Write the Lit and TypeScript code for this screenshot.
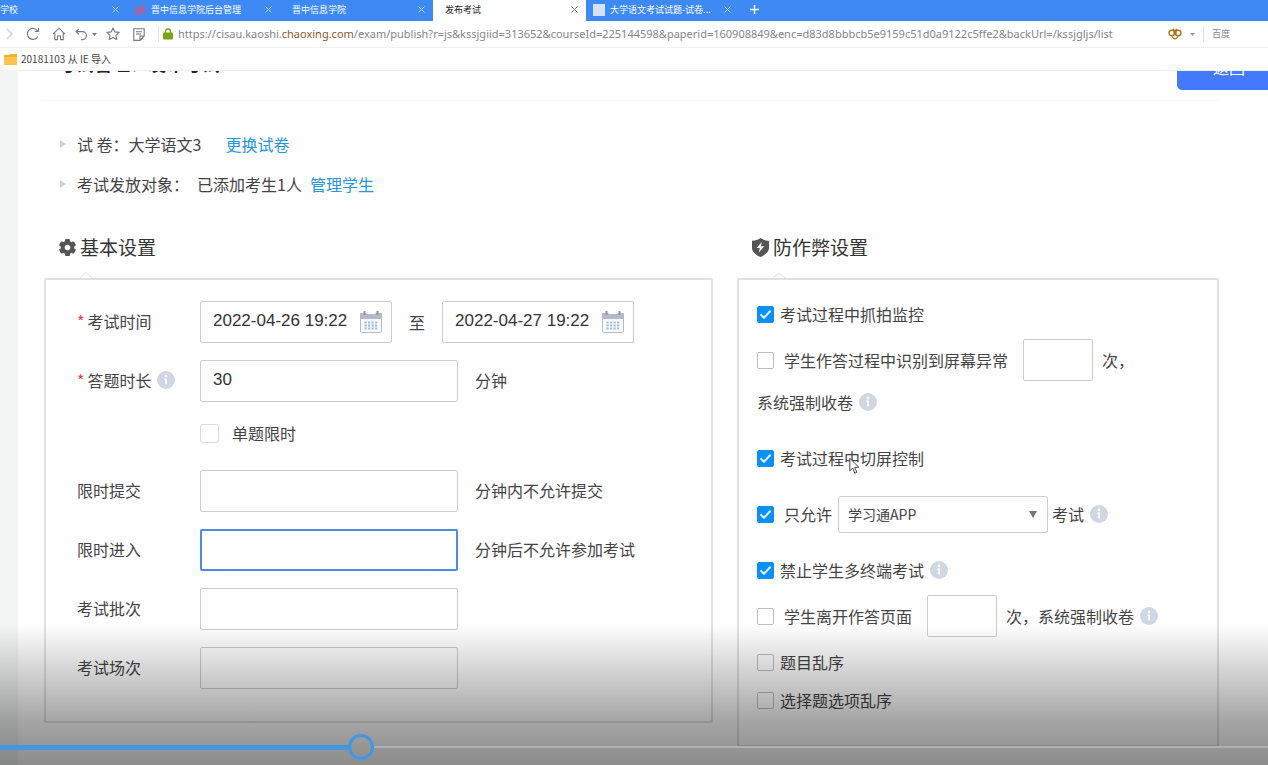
import { LitElement, html, css, svg, nothing } from "lit";
import { customElement, property, state } from "lit/decorators.js";
import { classMap } from "lit/directives/class-map.js";

const shared = css`
  * { box-sizing: border-box; }
  button, input, select { font: inherit; color: inherit; margin: 0; }
  button { border: 0; padding: 0; background: none; }
  svg { display: block; flex: none; }
  a { text-decoration: none; }
`;

interface Tab { title: string; active?: boolean; icon?: string; }

@customElement("browser-chrome")
class BrowserChrome extends LitElement {
  static styles = [shared, css`
    :host { display: block; flex: none; font-size: 9px; }
    .tabs { display: flex; height: 21px; background: #3d8af5; color: #fff; overflow: hidden; }
    .tab { flex: none; display: flex; align-items: center; gap: 5px; width: 153px; padding: 0 8px 2px 12px; }
    .tab.first { width: 127px; padding-left: 0; }
    .tab.icon { padding-left: 7px; }
    .tab.active { background: #fff; color: #222; }
    .title { flex: 1; white-space: nowrap; }
    .close { opacity: 0.6; }
    .fav { width: 12px; height: 12px; flex: none; background: #d3e1fa; }
    .red { background: none; color: #c85a86; }
    .add { width: 30px; display: grid; place-items: center; padding-bottom: 2px; }
    .bar { display: flex; align-items: center; height: 27px; color: #777; border-bottom: 1px solid #f0f0f0; background: #fff; }
    .tool { flex: none; height: 26px; width: 26px; display: grid; place-items: center; }
    .tool.narrow { width: 20px; color: #ccc; }
    .tool.undo { width: 28px; display: flex; align-items: center; justify-content: center; gap: 4px; }
    .sep { flex: none; width: 1px; height: 16px; background: #e2e2e2; }
    .gap { margin-left: 6px; }
    .address { flex: 1; min-width: 0; display: flex; align-items: center; gap: 5px; padding-left: 4px; font-family: "Noto Sans", sans-serif; font-size: 11px; color: #858585; white-space: nowrap; }
    .host { color: #8a5a2c; }
    .search { flex: none; display: flex; align-items: center; gap: 8px; width: 100px; color: #888; }
    .marks { display: flex; align-items: center; gap: 4px; height: 23px; padding: 0 4px; background: #fff; border-bottom: 1px solid #f0f0f0; font-size: 10px; color: #444; }
  `];

  private tabs: Tab[] = [
    { title: "学校" },
    { title: "晋中信息学院后台管理", icon: "red" },
    { title: "晋中信息学院" },
    { title: "发布考试", active: true },
    { title: "大学语文考试试题-试卷...", icon: "blank" },
  ];

  private renderTab(t: Tab, i: number) {
    return html`<div class=${classMap({ tab: true, first: i === 0, active: !!t.active, icon: !!t.icon })}>
      ${t.icon === "red"
        ? html`<svg class="fav red" viewBox="0 0 12 12" fill="none" stroke="currentColor" stroke-width="1.3"><path d="M2 2v8h3V4M1 6h4M7 10V2h3v8M7 5h3M7 8h4" /></svg>`
        : t.icon ? html`<span class="fav"></span>` : nothing}
      <span class="title">${t.title}</span>
      <button class="close" aria-label="关闭">
        <svg width="7" height="7" viewBox="0 0 7 7" stroke="currentColor" stroke-width="1"><path d="M.5.5l6 6M6.5.5l-6 6" /></svg>
      </button>
    </div>`;
  }

  render() {
    return html`
      <nav class="tabs">
        ${this.tabs.map((t, i) => this.renderTab(t, i))}
        <button class="add" aria-label="新标签页">
          <svg width="9" height="9" viewBox="0 0 9 9" stroke="#fff" stroke-width="1.4"><path d="M4.5 0v9M0 4.5h9" /></svg>
        </button>
      </nav>
      <div class="bar">
        <button class="tool narrow" aria-label="前进"><svg width="8" height="12" viewBox="0 0 8 12" fill="none" stroke="currentColor" stroke-width="1.2"><path d="M1 1l5 5-5 5" /></svg></button>
        <button class="tool" aria-label="刷新"><svg width="14" height="14" viewBox="0 0 14 14" fill="none" stroke="currentColor" stroke-width="1.1"><path d="M11.8 9.4A5.5 5.5 0 1 1 11.6 4M12.4.8v3.7H8.8" /></svg></button>
        <button class="tool" aria-label="主页"><svg width="14" height="14" viewBox="0 0 14 14" fill="none" stroke="currentColor" stroke-width="1.1"><path d="M1 7.2L7 1.2l6 6M2.8 6v6.6h2.7V9h3v3.6h2.7V6" /></svg></button>
        <button class="tool undo" aria-label="撤销">
          <svg width="13" height="13" viewBox="0 0 13 13" fill="none" stroke="currentColor" stroke-width="1.1"><path d="M4 .8L1 3.6l3 2.8M1 3.6h6.5a4 4 0 0 1 0 8H6" /></svg>
          <svg width="5" height="3" viewBox="0 0 5 3" fill="currentColor"><path d="M0 0h5L2.500 3z" /></svg>
        </button>
        <button class="tool" aria-label="收藏"><svg width="14" height="14" viewBox="0 0 14 14" fill="none" stroke="currentColor" stroke-width="1.1" stroke-linejoin="round"><path d="M7 1l1.800 3.900 4.300.5-3.200 2.900.9 4.200L7 10.400l-3.800 2.100.9-4.200L.9 5.400l4.300-.5z" /></svg></button>
        <button class="tool" aria-label="笔记"><svg width="12" height="13" viewBox="0 0 12 13" fill="none" stroke="currentColor" stroke-width="1.1"><path d="M7 12.400H.8V.7h10.400V8zM7 12.400V8h4.200M3 3.700h6M3 6h5" /></svg></button>
        <span class="sep gap"></span>
        <div class="address">
          <svg width="10" height="12" viewBox="0 0 10 12"><path d="M2.500 5V3.500a2.500 2.500 0 0 1 5 0V5" fill="none" stroke="#7aa51b" stroke-width="1.400" /><rect y="4.500" width="10" height="7" rx="1" fill="#7aa51b" /></svg>
          <span>https://cisau.kaoshi.<span class="host">chaoxing.com</span>/exam/publish?r=js&amp;kssjgiid=313652&amp;courseId=225144598&amp;paperid=160908849&amp;enc=d83d8bbbcb5e9159c51d0a9122c5ffe2&amp;backUrl=/kssjgljs/list</span>
        </div>
        <div class="search">
          <svg width="14" height="12" viewBox="0 0 14 12" fill="none" stroke="#a87516" stroke-width="1.400"><circle cx="3.800" cy="5" r="2.800" /><circle cx="10.200" cy="5" r="2.800" /><path d="M4 8.500c1.500 3 4.500 3 6 0M5.500 4.500L7 6l1.500-1.500M5 1l2 2 2-2" /></svg>
          <svg width="5" height="3" viewBox="0 0 5 3" fill="#999"><path d="M0 0h5L2.500 3z" /></svg>
          <span class="sep"></span>
          <span>百度</span>
        </div>
      </div>
      <div class="marks">
        <svg width="13" height="11" viewBox="0 0 13 11"><path d="M0 1h5l1.500-1H13v11H0z" fill="#f0b32c" /><path d="M0 3h13v8H0z" fill="#fbc54b" /></svg>
        <span>20181103 从 IE 导入</span>
      </div>`;
  }
}

@customElement("info-dot")
class InfoDot extends LitElement {
  static styles = css`:host { display: block; flex: none; } svg { display: block; }`;
  render() {
    return html`<svg width="18" height="18" viewBox="0 0 18 18"><circle cx="9" cy="9" r="9" fill="#d0d7e2" /><circle cx="9" cy="5" r="1.400" fill="#fff" /><path d="M7.300 7.500h2.600v5.800H8.200V8.700h-.9z" fill="#fff" /></svg>`;
  }
}

@customElement("check-item")
class CheckItem extends LitElement {
  @property() label = "";
  @property({ type: Boolean }) checked = false;
  @property({ type: Boolean }) wide = false;
  @property({ type: Boolean }) soft = false;
  static styles = [shared, css`
    :host { display: block; flex: none; }
    label { display: flex; align-items: center; gap: 6px; white-space: nowrap; }
    label.wide { gap: 10px; }
    label.soft { gap: 13px; }
    .box { display: grid; place-items: center; }
    .box > * { grid-area: 1 / 1; }
    input { appearance: none; width: 17px; height: 17px; border: 1px solid #bcbec4; border-radius: 2px; }
    input:checked { background: #0d90f5; border-color: #0d90f5; }
    .soft input { width: 19px; height: 19px; border-color: #d8dade; border-radius: 3px; }
    svg { pointer-events: none; }
  `];
  render() {
    return html`<label class=${classMap({ wide: this.wide, soft: this.soft })}>
      <span class="box">
        <input type="checkbox" .checked=${this.checked} @change=${(e: Event) => (this.checked = (e.target as HTMLInputElement).checked)} />
        ${this.checked ? html`<svg width="13" height="11" viewBox="0 0 13 11" fill="none" stroke="#d8f2ff" stroke-width="2"><path d="M1.500 5.200l3.500 3.600 6.500-7" /></svg>` : nothing}
      </span>${this.label}</label>`;
  }
}

@customElement("app-root")
class AppRoot extends LitElement {
  @state() private progress = 280;

  static styles = [shared, css`
    :host { display: flex; flex-direction: column; height: 100vh; position: relative; overflow: hidden; background: #fff; color: #444; font-family: "Noto Sans CJK SC", sans-serif; font-size: 16px; line-height: 24px; }
    .viewport { flex: 1; min-height: 0; overflow: hidden; display: grid; grid-template-columns: 18px 1fr; }
    .gutter { background: #f3f4f4; }
    .page { padding: 0 49px 0 26px; min-width: 0; background: #fefefe; }
    .top { display: flex; align-items: flex-end; justify-content: space-between; margin-top: -24px; padding-bottom: 10px; border-bottom: 1px solid #f8f8f8; }
    .top h1 { margin: 0 0 15px 14px; font-size: 18px; line-height: 24px; font-weight: 700; color: #222; }
    .back { width: 104px; height: 43px; margin-right: -62px; padding-bottom: 4px; border-radius: 5px; background: #4479fb; color: #fff; }
    .facts { display: flex; flex-direction: column; gap: 16px; margin: 0; padding: 31px 0 0 16px; list-style: none; }
    .fact { display: flex; align-items: center; }
    .fact svg { margin-right: 11px; }
    .fact a { color: #2695e0; }
    .far { margin-left: 24px; }
    .near { margin-left: 8px; }
    .who { margin-left: 8px; }
    .columns { display: grid; grid-template-columns: minmax(0, 669fr) minmax(0, 482fr); gap: 24px; align-items: start; padding-top: 39px; }
    h2 { display: flex; align-items: center; gap: 4px; margin: 0; padding-left: 15px; height: 24px; font-size: 19px; font-weight: 400; color: #333; }
    .notch { margin: 13px 0 0 36px; }
    .panel { border: 2px solid #e0e1e4; border-radius: 2px; }
    .basic { display: grid; gap: 17px; padding: 21px 31px 32px; }
    .field { display: grid; grid-template-columns: 123px auto 1fr; align-items: center; height: 42px; }
    .field.short { height: 28px; margin-bottom: 6px; }
    .name { display: flex; align-items: center; gap: 5px; padding-bottom: 2px; }
    .name i { color: #e0414e; font-style: normal; margin-right: -2px; }
    .text { width: 258px; height: 42px; padding: 0 12px 2px; border: 1px solid #ccccd0; border-radius: 2px; background: none; font-family: "Liberation Sans", sans-serif; font-size: 17px; color: #333; outline: 0; }
    .text.current { border: 2px solid #5288e0; }
    .unit { padding: 0 0 2px 17px; }
    .dates { display: flex; align-items: center; gap: 17px; grid-column: 2 / -1; }
    .date { display: grid; align-items: center; }
    .date > * { grid-area: 1 / 1; }
    .date .text { width: 192px; }
    .date svg { justify-self: end; margin-right: 10px; }
    .guard { padding: 15px 17px 26px 18px; }
    .row { display: flex; align-items: center; height: 38px; margin-top: 18px; }
    .row:first-child, .row.flush { margin-top: 0; }
    .row.tight { margin-top: 6px; }
    .row.next { margin-top: 2px; }
    .row.tall { height: 42px; }
    .row info-dot { margin-left: 6px; }
    .text.count { width: 70px; margin: 0 9px 0 15px; background: #fff; }
    .pick { display: grid; align-items: center; margin: 0 4px 0 6px; }
    .pick > * { grid-area: 1 / 1; }
    .pick select { appearance: none; width: 210px; height: 37px; padding: 0 9px; border: 1px solid #ccccd0; border-radius: 3px; background: none; font-size: 14px; }
    .pick svg { justify-self: end; margin-right: 11px; pointer-events: none; }
    .pointer { position: absolute; left: 849px; top: 457px; }
    .player { position: absolute; left: 0; right: 0; bottom: 0; height: 140px; background: linear-gradient(rgba(0,0,0,0), rgba(0,0,0,.13) 25%, rgba(0,0,0,.35) 68%, rgba(0,0,0,.45)); display: flex; align-items: flex-end; padding-bottom: 5px; pointer-events: none; }
    .seek { appearance: none; display: block; width: 100%; height: 26px; background: linear-gradient(#4297e2, #4297e2) left center / calc(var(--done) * (100% - 26px) + 2px) 5px no-repeat, linear-gradient(to right, transparent calc(var(--done) * (100% - 26px) + 25px), #b0b0b0 0) left center / 100% 2px no-repeat; pointer-events: auto; }
    .seek::-webkit-slider-thumb { appearance: none; width: 26px; height: 26px; border: 3px solid #4297e2; border-radius: 50%; background: transparent; }
  `];

  private calendar() {
    return html`<svg width="22" height="22" viewBox="0 0 22 22"><rect x=".5" y="2.500" width="21" height="19" rx="1" fill="#f8fafd" stroke="#b3bac8" /><path d="M0 2h22v6H0z" fill="#b6bac7" /><path d="M3.500 0h2v4h-2zM16.500 0h2v4h-2z" fill="#8e95a7" /><path d="M6.500 1h9v2h-9z" fill="#fff" />${[10.5, 13.5, 16.5].map(y => [4.5, 8, 11.5, 15].map(x => svg`<rect x=${x} y=${y} width="2.200" height="2" fill="#a6bddd" />`))}</svg>`;
  }

  private date(id: string, value: string, label: string) {
    return html`<span class="date"><input id=${id} class="text" aria-label=${label} .value=${value} />${this.calendar()}</span>`;
  }

  private limit(id: string, name: string, unit: string, current = false) {
    return html`<div class="field">
      <label class="name" for=${id}>${name}</label>
      <input id=${id} class=${classMap({ text: true, current })} />
      <span class="unit">${unit}</span>
    </div>`;
  }

  private notch() {
    return html`<svg class="notch" width="12" height="6" viewBox="0 0 12 6" fill="#fefefe" stroke="#e0e1e4"><path d="M0 6l6-5.500L12 6" /></svg>`;
  }

  private bullet() {
    return html`<svg width="6" height="8" viewBox="0 0 6 8" fill="#d2d2d2"><path d="M0 0l6 4-6 4z" /></svg>`;
  }

  render() {
    return html`
      <browser-chrome></browser-chrome>
      <div class="viewport">
        <div class="gutter"></div>
        <main class="page">
          <header class="top"><h1>考试管理：发布考试</h1><button class="back">返回</button></header>
          <ul class="facts">
            <li class="fact">${this.bullet()}<span>试 卷：大学语文3</span><a class="far" href="#paper">更换试卷</a></li>
            <li class="fact">${this.bullet()}<span>考试发放对象：</span><span class="who">已添加考生1人</span><a class="near" href="#students">管理学生</a></li>
          </ul>
          <div class="columns">
            <section>
              <h2>
                <svg width="17" height="17" viewBox="0 0 17 17"><g fill="#555">${[0, 60, 120].map(a => svg`<rect x="6" y="0" width="5" height="17" rx="1" transform="rotate(${a} 8.500 8.500)" />`)}<circle cx="8.500" cy="8.500" r="6.700" /></g><circle cx="8.500" cy="8.500" r="2.800" fill="#fff" /></svg>
                基本设置
              </h2>
              ${this.notch()}
              <div class="panel basic">
                <div class="field">
                  <label class="name" for="start"><i>*</i>考试时间</label>
                  <div class="dates">${this.date("start", "2022-04-26 19:22", "开始时间")}<span>至</span>${this.date("end", "2022-04-27 19:22", "结束时间")}</div>
                </div>
                <div class="field">
                  <label class="name" for="length"><i>*</i>答题时长<info-dot></info-dot></label>
                  <input id="length" class="text" .value=${"30"} />
                  <span class="unit">分钟</span>
                </div>
                <div class="field short"><span></span><check-item soft label="单题限时"></check-item></div>
                ${this.limit("submit", "限时提交", "分钟内不允许提交")}
                ${this.limit("enter", "限时进入", "分钟后不允许参加考试", true)}
                ${this.limit("batch", "考试批次", "")}
                ${this.limit("session", "考试场次", "")}
              </div>
            </section>
            <section>
              <h2>
                <svg width="17" height="19" viewBox="0 0 17 19"><path d="M8.500 0c2.500 1.800 5 2.600 8.500 2.800v7c0 4.200-4 7.400-8.500 9.200C4 17.200 0 14 0 9.800v-7C3.500 2.600 6 1.800 8.500 0z" fill="#555" /><path d="M9.800 4L4.500 10h3.300L6.800 14.500l5.500-6.300H8.900z" fill="#fff" /></svg>
                防作弊设置
              </h2>
              ${this.notch()}
              <div class="panel guard">
                <div class="row"><check-item checked label="考试过程中抓拍监控"></check-item></div>
                <div class="row tight tall"><check-item wide label="学生作答过程中识别到屏幕异常"></check-item><input class="text count" aria-label="屏幕异常次数" />次，</div>
                <div class="row next">系统强制收卷<info-dot></info-dot></div>
                <div class="row"><check-item checked label="考试过程中切屏控制"></check-item></div>
                <div class="row">
                  <check-item checked wide label="只允许"></check-item>
                  <span class="pick"><select aria-label="考试终端"><option>学习通APP</option></select><svg width="8" height="7" viewBox="0 0 8 7" fill="#777"><path d="M0 0h8L4 7z" /></svg></span>
                  考试<info-dot></info-dot>
                </div>
                <div class="row"><check-item checked label="禁止学生多终端考试"></check-item><info-dot></info-dot></div>
                <div class="row tight tall"><check-item wide label="学生离开作答页面"></check-item><input class="text count" aria-label="离开页面次数" />次，系统强制收卷<info-dot></info-dot></div>
                <div class="row tight"><check-item label="题目乱序"></check-item></div>
                <div class="row flush"><check-item label="选择题选项乱序"></check-item></div>
              </div>
            </section>
          </div>
        </main>
      </div>
      <svg class="pointer" width="11" height="18" viewBox="0 0 11 18" fill="#fff" stroke="#444"><path d="M.8 1.200v12.600l3-2.800 2 5.200 2-.9-2-5h4z" /></svg>
      <div class="player">
        <input class="seek" type="range" min="0" max="1000" aria-label="播放进度" .value=${String(this.progress)} style="--done:${this.progress / 1000}" @input=${(e: Event) => (this.progress = Number((e.target as HTMLInputElement).value))} />
      </div>`;
  }
}
